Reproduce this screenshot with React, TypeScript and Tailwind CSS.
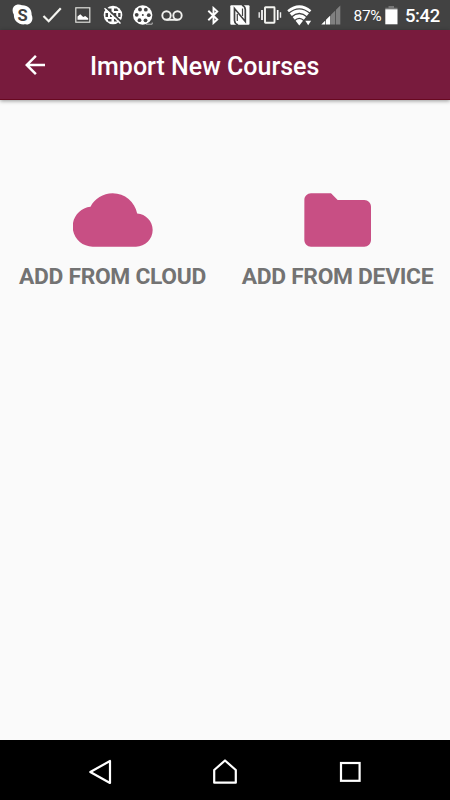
import React from "react";

interface IconProps {
  className?: string;
}

function SkypeIcon({ className }: IconProps) {
  return (
    <svg className={className} width="22" height="22" viewBox="0 0 22 22">
      <path
        d="M5.500.5C7.200.3 8.700.6 10 1.200c5.800-.3 10 4 9.600 9.500 2.600 5.200-1.200 10.800-6.400 9.600C6.800 21.300 1.500 17 1.900 10.700-.9 6 .9 1.200 5.500.5z"
        fill="#fff"
      />
      <text
        x="10.500"
        y="16.600"
        textAnchor="middle"
        fontSize="16.500"
        fontWeight="700"
        fontFamily="Roboto, sans-serif"
        fill="#424242"
      >
        S
      </text>
    </svg>
  );
}

function CheckIcon({ className }: IconProps) {
  return (
    <svg className={className} width="20" height="18" viewBox="0 0 20 18">
      <path d="M1.500 10L6.700 15.200L18.800 2.300" fill="none" stroke="#f4f4f0" strokeWidth="2.200" />
    </svg>
  );
}

function PictureIcon({ className }: IconProps) {
  return (
    <svg className={className} width="16" height="16" viewBox="0 0 16 16">
      <rect x=".8" y=".8" width="14" height="14.400" fill="none" stroke="#e0e0dc" strokeWidth="1.200" />
      <path d="M2.500 12.800V9.600L5.300 7.200L8.200 9.900L10.200 9L13.200 11.200V12.800z" fill="#fff" />
    </svg>
  );
}

function GlobeOffIcon({ className }: IconProps) {
  return (
    <svg className={className} width="20" height="20" viewBox="0 0 20 20" fill="none">
      <circle cx="10" cy="10" r="9.300" fill="#fff" />
      <g fill="#424242">
        <path d="M5.500 3.500H8.500V6H4.500zM11 3.500H14L15.500 6H11z" />
        <path d="M2.500 8H5V12H2.500zM7 8H9V12H7zM11 8H13.200V12H11zM15.200 8H17.500V12H15.200z" />
        <path d="M4.500 14H8.500V16.500H5.500zM11 14H15.500L14 16.500H11z" />
      </g>
      <path d="M2.500 2L19 17.500" stroke="#424242" strokeWidth="1.800" />
      <path d="M1.500 3.200L17.500 18.500" stroke="#fff" strokeWidth="1.500" />
    </svg>
  );
}

function ReelIcon({ className }: IconProps) {
  return (
    <svg className={className} width="21" height="20" viewBox="0 0 21 20">
      <circle cx="9.700" cy="10" r="9.700" fill="#fff" />
      <path d="M13 19.200H19.200V17.500" fill="none" stroke="#bbb" strokeWidth="1" />
      <g fill="#424242">
        <circle cx="7" cy="4.500" r="1.900" />
        <circle cx="12.800" cy="4.700" r="1.900" />
        <circle cx="3.700" cy="9.800" r="1.900" />
        <circle cx="15.800" cy="10.200" r="1.900" />
        <circle cx="6.500" cy="15.200" r="1.900" />
        <circle cx="12.500" cy="15.300" r="1.900" />
        <circle cx="9.800" cy="10" r="1" />
      </g>
    </svg>
  );
}

function VoicemailIcon({ className }: IconProps) {
  return (
    <svg className={className} width="22" height="11" viewBox="0 0 22 11">
      <g fill="none" stroke="#f1f1ee" strokeWidth="1.900">
        <circle cx="5.500" cy="5.500" r="4.200" />
        <circle cx="16.500" cy="5.500" r="4.200" />
        <path d="M5.500 9.800H16.500" />
      </g>
    </svg>
  );
}

function BluetoothIcon({ className }: IconProps) {
  return (
    <svg className={className} width="12" height="19" viewBox="0 0 12 19">
      <path
        d="M1.300 4.700L10.300 13.500L6.500 17V2L10.300 5.500L1.300 14.300"
        fill="none"
        stroke="#fff"
        strokeWidth="1.900"
      />
    </svg>
  );
}

function NfcIcon({ className }: IconProps) {
  return (
    <svg className={className} width="20" height="20" viewBox="0 0 20 20">
      <rect x=".3" y=".3" width="19.200" height="19.400" rx="1" fill="#fff" />
      <path
        d="M8 20Q4.500 18.500 4.500 15.500V3.500L15.300 16.500V4.500Q15.300 1.500 12 0"
        fill="none"
        stroke="#424242"
        strokeWidth="1.700"
      />
      <path d="M7.300 9V16M12.500 3.500V11" stroke="#424242" strokeWidth="1.200" />
    </svg>
  );
}

function VibrateIcon({ className }: IconProps) {
  return (
    <svg className={className} width="24" height="18" viewBox="0 0 24 18" fill="none">
      <rect x="7" y="1.200" width="9.500" height="15.600" rx=".5" stroke="#f4f4f0" strokeWidth="1.900" />
      <path d="M4 4V14M19.700 4V14" stroke="#fff" strokeWidth="1.700" />
      <path d="M1.200 6.300V11.700M22.500 6.300V11.700" stroke="#eee" strokeWidth="1.400" />
    </svg>
  );
}

function WifiIcon({ className }: IconProps) {
  return (
    <svg className={className} width="26" height="22" viewBox="0 0 26 22">
      <path d="M.3 6.200Q12.300-3.800 24.300 6.200L12.300 21.500z" fill="#fff" />
      <g fill="none" stroke="#424242" strokeWidth="1.300">
        <path d="M1.500 9.300Q12.300.3 23.100 9.300" />
        <path d="M4.500 12.900Q12.300 6.100 20.100 12.900" />
        <path d="M7.500 16.700Q12.300 11.900 17.100 16.700" />
      </g>
      <path d="M17.200 16H25V21.500H17.200z" fill="#424242" />
      <path d="M18.300 16.700H24.100L21.200 21.300z" fill="#fff" />
    </svg>
  );
}

function SignalIcon({ className }: IconProps) {
  return (
    <svg className={className} width="20" height="20" viewBox="0 0 20 20">
      <path d="M.3 19.500L4.300 15.500V19.500zM5 19.500V14.700L9.300 10.400V19.500z" fill="#fff" />
      <path d="M10 19.500V9.700L14.300 5.400V19.500zM15 19.500V4.700L19.300.5V19.500z" fill="#808080" />
    </svg>
  );
}

function BatteryIcon({ className }: IconProps) {
  return (
    <svg className={className} width="13" height="19" viewBox="0 0 13 19">
      <path d="M3.500 0H9V1.700H12.500V3.500H.3V1.700H3.500z" fill="#777" />
      <path d="M.3 3.300H12.500V18.300H.3z" fill="#fff" />
    </svg>
  );
}

function StatusBar() {
  return (
    <div className="flex h-[30px] items-center bg-[#424242] text-white">
      <SkypeIcon className="ml-3 shrink-0" />
      <CheckIcon className="ml-2 shrink-0" />
      <PictureIcon className="ml-[12.500px] shrink-0" />
      <GlobeOffIcon className="ml-[12px] shrink-0" />
      <ReelIcon className="ml-[10px] shrink-0" />
      <VoicemailIcon className="ml-[7.500px] shrink-0" />
      <BluetoothIcon className="ml-[23.500px] shrink-0" />
      <NfcIcon className="ml-[11px] shrink-0" />
      <VibrateIcon className="ml-[8px] shrink-0" />
      <WifiIcon className="ml-[5px] shrink-0" />
      <SignalIcon className="ml-[8.500px] shrink-0" />
      <span className="ml-[12.500px] w-[31.500px] shrink-0 pt-0.5 text-[15.500px] leading-7 tracking-[-0.300px]">
        87%
      </span>
      <BatteryIcon className="shrink-0" />
      <span className="ml-[7px] shrink-0 pt-0.5 text-[18.500px] leading-7 font-medium tracking-[-0.400px]">
        5:42
      </span>
    </div>
  );
}

function AppBar() {
  return (
    <header className="relative flex h-[70px] items-center border-b border-[#680820] bg-[#781b3d] pl-5 text-white shadow-[0_1px_4px_rgba(0,0,0,0.4)]">
      <button type="button" aria-label="Back">
        <svg width="30" height="30" viewBox="0 0 24 24" fill="#fff">
          <path d="M20 11H7.830l5.590-5.590L12 4l-8 8 8 8 1.410-1.410L7.830 13H20v-2z" />
        </svg>
      </button>
      <h1 className="ml-10 pt-[5px] text-[25px] font-medium">Import New Courses</h1>
    </header>
  );
}

interface ImportOptionProps {
  label: string;
  path: string;
}

function ImportOption({ label, path }: ImportOptionProps) {
  return (
    <button type="button" className="flex flex-col items-center">
      <svg width="80" height="80" viewBox="0.100 0 24 24" fill="#c84f84">
        <path d={path} />
      </svg>
      <span className="text-[22.800px] leading-[34px] font-bold tracking-[-0.300px] whitespace-nowrap text-[#737373]">
        {label}
      </span>
    </button>
  );
}

const options = [
  {
    label: "ADD FROM CLOUD",
    path: "M19.350 10.040C18.670 6.590 15.640 4 12 4 9.110 4 6.600 5.640 5.350 8.040 2.340 8.360 0 10.910 0 14c0 3.310 2.690 6 6 6h13c2.760 0 5-2.240 5-5 0-2.640-2.050-4.780-4.650-4.960z",
  },
  {
    label: "ADD FROM DEVICE",
    path: "M10 4H4c-1.100 0-1.990.9-1.990 2L2 18c0 1.100.9 2 2 2h16c1.100 0 2-.9 2-2V8c0-1.100-.9-2-2-2h-8l-2-2z",
  },
];

function NavBar() {
  return (
    <nav className="flex h-[60px] items-center justify-center bg-black pt-1">
      <button type="button" aria-label="Back" className="flex w-[125px] justify-center">
        <svg width="26" height="26" viewBox="0 0 26 26" fill="none">
          <path d="M3.300 13L23 2V24z" stroke="#fff" strokeWidth="2.200" strokeLinejoin="round" />
        </svg>
      </button>
      <button type="button" aria-label="Home" className="flex w-[125px] justify-center">
        <svg width="26" height="26" viewBox="0 0 26 26" fill="none">
          <path d="M2.200 11L13 1.500L23.800 11V23.700H2.200z" stroke="#fff" strokeWidth="2.200" strokeLinejoin="round" />
        </svg>
      </button>
      <button type="button" aria-label="Recent apps" className="flex w-[125px] justify-center">
        <svg width="22" height="22" viewBox="0 0 22 22" fill="none">
          <rect x="2" y="2" width="18.600" height="17.800" stroke="#fff" strokeWidth="2.200" />
        </svg>
      </button>
    </nav>
  );
}

export default function App() {
  return (
    <div className="flex h-[800px] w-[450px] flex-col overflow-hidden bg-[#fafafa] font-[Roboto,sans-serif]">
      <StatusBar />
      <AppBar />
      <main className="grid flex-1 grid-cols-2 content-start pt-20">
        {options.map((o) => (
          <ImportOption key={o.label} label={o.label} path={o.path} />
        ))}
      </main>
      <NavBar />
    </div>
  );
}
